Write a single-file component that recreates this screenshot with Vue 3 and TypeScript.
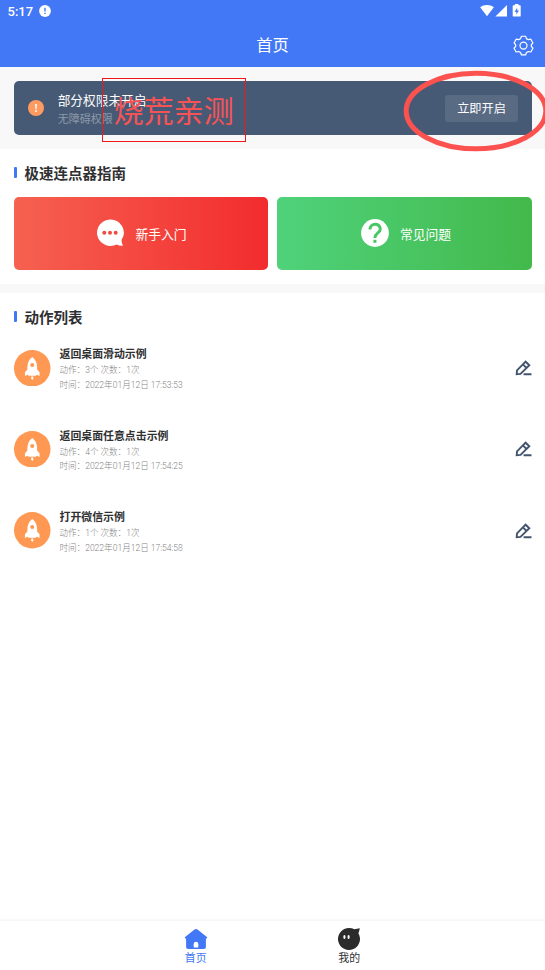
<script setup lang="ts">
interface ActionItem {
  title: string
  steps: number
  times: number
  date: string
}

const actions: ActionItem[] = [
  { title: '返回桌面滑动示例', steps: 3, times: 1, date: '2022年01月12日 17:53:53' },
  { title: '返回桌面任意点击示例', steps: 4, times: 1, date: '2022年01月12日 17:54:25' },
  { title: '打开微信示例', steps: 1, times: 1, date: '2022年01月12日 17:54:58' },
]
</script>

<template>
  <div class="screen">
    <header class="top">
      <div class="status">
        <span class="clock">5:17</span>
        <svg class="notice" viewBox="0 0 12 12"><circle cx="6" cy="6" r="5.9" fill="#fff" /><path d="M6 2.8v3.7M6 7.7v1.4" stroke="#4278f5" stroke-width="1.4" /></svg>
        <svg class="signals" viewBox="0 0 42 14">
          <path d="M0.2 3.2C3.9 0.4 10.1 0.4 13.8 3.2L7 12.2z" fill="#fff" />
          <path d="M15.4 12.4H27V1z" fill="#fff" />
          <path d="M34.900 0h3.600v1.200h1.300q.9 0 .9.9v9.600q0 .9-.9.9h-6.200q-.9 0-.9-.9V2.100q0-.9.9-.9h1.300z" fill="#fff" />
          <path d="M37.200 3.800L34.500 7.700H36.300V10.500L39 6.600H37.200z" fill="#4278f5" />
        </svg>
      </div>
      <div class="titlebar">
        <h1>首页</h1>
        <svg class="gear" viewBox="0 0 22 22" fill="none" stroke="#fff" stroke-width="1.25" stroke-linejoin="round">
          <path d="M8.800 1.300h4.400l.9 2.500 2 1.100 2.600-.5 2.200 3.900-1.700 1.900v1.800l1.700 1.900-2.200 3.900-2.600-.5-2 1.100-.9 2.500H8.800l-.9-2.500-2-1.100-2.600.5-2.200-3.900L2.800 12v-1.800L1.100 8.300l2.200-3.900 2.600.5 2-1.100z" />
          <circle cx="11" cy="11.100" r="3.700" />
        </svg>
      </div>
    </header>

    <section class="permission">
      <div class="banner">
        <svg class="warn" viewBox="0 0 16 16"><circle cx="8" cy="8" r="8" fill="#ff9b61" /><path d="M7.100 3.900h1.800l-.3 5.300H7.400zM7.200 10.300h1.600v1.700H7.200z" fill="#fff" /></svg>
        <div class="banner-text">
          <strong>部分权限未开启</strong>
          <span>无障碍权限</span>
        </div>
        <button class="enable">立即开启</button>
      </div>
      <div class="stamp">烧荒亲测</div>
      <svg class="ring" viewBox="0 0 146 84"><ellipse cx="73" cy="42" rx="69.800" ry="37.800" fill="none" stroke="#fb5250" stroke-width="5" /></svg>
    </section>

    <section class="guide">
      <h2>极速连点器指南</h2>
      <div class="cards">
        <div class="card red">
          <svg viewBox="0 0 28 28">
            <path d="M14 .5a13.600 13.200 0 1 0 6.700 25q3 1.600 6.300 1.200Q25.600 24.400 25.500 21.100A13.400 13.200 0 0 0 14 .5z" fill="#fff" />
            <g fill="#f24b42"><circle cx="8.300" cy="13.700" r="2" /><circle cx="14" cy="13.700" r="2" /><circle cx="19.700" cy="13.700" r="2" /></g>
          </svg>
          <span>新手入门</span>
        </div>
        <div class="card green">
          <svg viewBox="0 0 28 28">
            <circle cx="14" cy="14" r="13.900" fill="#fff" />
            <path d="M9 10.500C9 3.600 19.300 3.900 19.300 9.900C19.300 13.900 13.900 13.900 13.900 18.900" fill="none" stroke="#49c766" stroke-width="3" />
            <path d="M12.400 20.800h3v3h-3z" fill="#49c766" />
          </svg>
          <span>常见问题</span>
        </div>
      </div>
    </section>

    <section class="actions">
      <h2>动作列表</h2>
      <ul>
        <li v-for="item in actions" :key="item.title">
          <svg class="rocket" viewBox="0 0 36 36">
            <circle cx="18" cy="18" r="18" fill="#ff9853" />
            <path d="M18 7Q22.800 10.600 22.800 17v2.200l2.400 2.800v3.700l-2.500-1.300-1.300 1h-6.800l-1.300-1-2.500 1.300V22l2.400-2.800V17Q13.200 10.600 18 7z" fill="#fff" />
            <circle cx="18" cy="14.800" r="2" fill="#ff9853" />
            <path d="M17 26.200h2v1.800l-1 1.700-1-1.700z" fill="#fff" />
          </svg>
          <div class="info">
            <h3>{{ item.title }}</h3>
            <p>动作：{{ item.steps }}个 次数：{{ item.times }}次</p>
            <p>时间：{{ item.date }}</p>
          </div>
          <svg class="edit" viewBox="0 0 17 16" fill="none" stroke="#43546f" stroke-width="1.900">
            <path d="M1.700 14.200l.3-3.900 8.600-8.600 3.700 3.600-8.800 8.600zM7.900 4.400l3.700 3.600M8.600 14.200h7.900" />
          </svg>
        </li>
      </ul>
    </section>

    <nav class="tabs">
      <div class="tab active">
        <svg viewBox="0 0 24 22"><path d="M12 1q.8 0 1.500.6L22.900 9q.9.900-.2 1.400h-.8v8.500q0 2-2 2H4.100q-2 0-2-2v-8.500h-.8Q.2 9.900 1.100 9l9.400-7.400Q11.200 1 12 1z" fill="#4278f5" /><path d="M9.700 19.500v-3.300q0-2.400 2.300-2.400t2.300 2.400v3.300z" fill="#fff" /></svg>
        <span>首页</span>
      </div>
      <div class="tab">
        <svg viewBox="0 0 24 22"><path d="M12 0Q15 0 17.400 1.300Q20 1 22.800.3Q22.400 3 21.400 5.300A11 11 0 1 1 12 0z" fill="#2b2b2b" /><ellipse cx="7.400" cy="9" rx="1.100" ry="2.100" fill="#fff" /><ellipse cx="11.600" cy="9" rx="1.100" ry="2.100" fill="#fff" /></svg>
        <span>我的</span>
      </div>
    </nav>
  </div>
</template>

<style>
body {
  margin: 0;
}
</style>

<style scoped>
.screen {
  display: flex;
  flex-direction: column;
  width: 545px;
  height: 970px;
  overflow: hidden;
  background: #fff;
  color: #2f3031;
  font-family: Roboto, "Noto Sans CJK SC", sans-serif;
}
h1, h2, h3, p, ul {
  margin: 0;
  padding: 0;
}
svg {
  display: block;
  flex: none;
}
.top {
  height: 67.300px;
  flex: none;
  background: #4278f5;
  color: #fff;
}
.status {
  display: flex;
  align-items: center;
  height: 23px;
  padding: 0 23px 0 7.500px;
}
.clock {
  font-size: 13px;
  font-weight: 500;
  line-height: 23px;
  width: 31px;
}
.notice {
  width: 12px;
  height: 12px;
  margin-top: -1px;
}
.signals {
  width: 42px;
  height: 14px;
  margin-left: auto;
  margin-top: -2px;
}
.titlebar {
  display: grid;
  grid-template-columns: 1fr auto 1fr;
  align-items: center;
  height: 44px;
  padding: 0 11px;
}
h1 {
  grid-column: 2;
  font-size: 16.300px;
  font-weight: 400;
  line-height: 24px;
  padding-top: 2px;
}
.gear {
  width: 21px;
  height: 21px;
  justify-self: end;
}
.permission {
  position: relative;
  flex: none;
  height: 67.700px;
  padding: 14px 13px 0 14px;
  background: #f8f8f8;
}
.banner {
  display: flex;
  align-items: center;
  height: 54px;
  padding: 0 14px;
  box-sizing: border-box;
  border-radius: 5px;
  background: #475a75;
}
.warn {
  width: 16px;
  height: 16px;
}
.banner-text {
  display: flex;
  flex-direction: column;
  margin-left: 13.700px;
  padding-top: 3px;
}
.banner-text strong {
  font-size: 12.700px;
  font-weight: 400;
  line-height: 20px;
  color: #fff;
}
.banner-text span {
  font-size: 11px;
  line-height: 18px;
  color: #8d99aa;
}
.enable {
  width: 73px;
  height: 27px;
  margin-left: auto;
  padding: 2px 0 0;
  border: 0;
  border-radius: 3px;
  background: #596a83;
  color: #fff;
  font: 12.200px/25px Roboto, "Noto Sans CJK SC", sans-serif;
}
.stamp {
  position: absolute;
  left: 102px;
  top: 11px;
  width: 143.500px;
  height: 64px;
  box-sizing: border-box;
  border: 1.500px solid #f21818;
  color: #f75356;
  font-size: 30px;
  line-height: 65px;
  text-align: center;
}
.ring {
  position: absolute;
  left: 403px;
  top: 2px;
  width: 146px;
  height: 84px;
}
.guide {
  flex: none;
  height: 135px;
  padding: 0 13px 0 14px;
  border-bottom: 9px solid #f8f8f8;
}
h2 {
  display: flex;
  align-items: center;
  gap: 7.500px;
  height: 48px;
  box-sizing: border-box;
  padding-top: 4px;
  font-size: 14.500px;
  font-weight: 700;
  line-height: 22px;
}
h2::before {
  content: "";
  width: 3px;
  height: 11px;
  margin-top: -4px;
  border-radius: 1px;
  background: #4278f5;
}
.cards {
  display: grid;
  grid-template-columns: 254px 255px;
  gap: 9px;
}
.card {
  display: flex;
  align-items: center;
  justify-content: center;
  gap: 11px;
  height: 73px;
  border-radius: 5px;
  color: #fff;
  font-size: 12.800px;
  line-height: 20px;
}
.card svg {
  width: 28px;
  height: 28px;
}
.card span {
  padding-top: 3px;
}
.red {
  background: linear-gradient(90deg, #f66150, #f22c2e);
}
.green {
  padding-left: 3px;
  background: linear-gradient(90deg, #4fd27b, #43b94b);
}
.red {
  padding-left: 1px;
}
.actions {
  flex: 1;
  padding: 0 13px 0 14px;
}
ul {
  list-style: none;
  padding-top: 6.300px;
}
li {
  display: flex;
  align-items: center;
  height: 41.300px;
  margin-bottom: 40px;
}
.rocket {
  width: 36.500px;
  height: 36.500px;
}
.info {
  margin-left: 9px;
  padding-top: 4.500px;
}
h3 {
  font-size: 10.900px;
  font-weight: 700;
  line-height: 16px;
}
p {
  font-size: 8.550px;
  font-weight: 300;
  line-height: 14.700px;
  color: #858585;
}
.edit {
  width: 17px;
  height: 16px;
  margin-left: auto;
}
.tabs {
  display: flex;
  justify-content: center;
  gap: 129.500px;
  height: 50px;
  flex: none;
  box-sizing: border-box;
  border-top: 1px solid #f7f7f7;
  box-shadow: 0 -1px 1px #fafafa;
}
.tab {
  display: flex;
  flex-direction: column;
  align-items: center;
  width: 24px;
  padding-top: 7px;
  font-size: 10.900px;
  line-height: 18px;
  white-space: nowrap;
}
.tab svg {
  width: 24px;
  height: 22px;
}
.active {
  color: #4278f5;
}
</style>
